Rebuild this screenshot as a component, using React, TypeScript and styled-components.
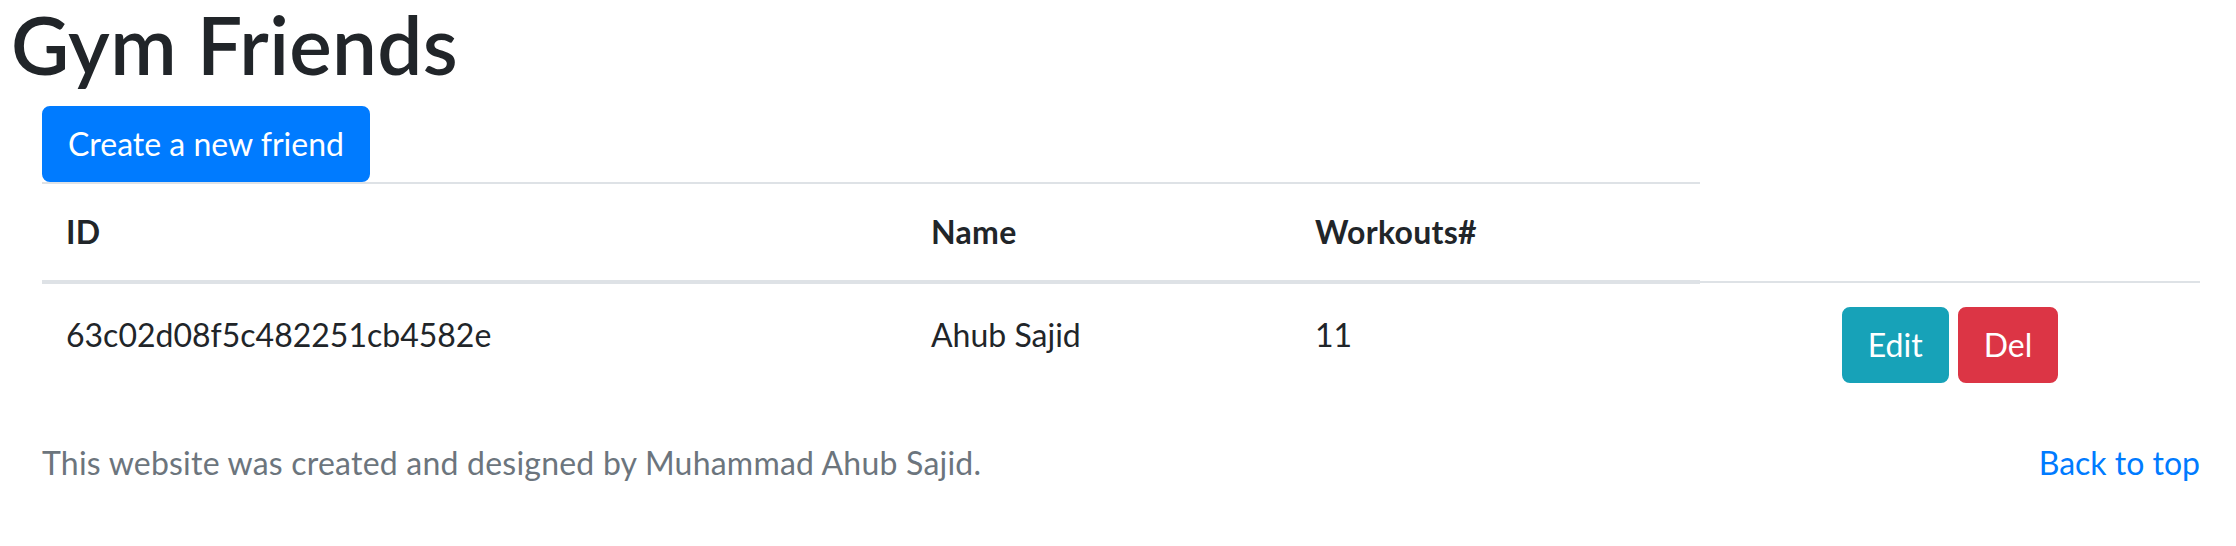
import React from "react";
import styled, { createGlobalStyle, css } from "styled-components";

const Global = createGlobalStyle`
  html, body {
    margin: 0;
    padding: 0;
    background: #ffffff;
  }
  body {
    font-family: Lato, "Open Sans", "Noto Sans", sans-serif;
    font-size: 32px;
    line-height: 48px;
    color: #212529;
    -webkit-font-smoothing: antialiased;
  }
  *, *::before, *::after { box-sizing: border-box; }
`;

const Page = styled.div`
  display: flex;
  flex-direction: column;
  width: 2236px;
`;

const Title = styled.h1`
  margin: -4px 0 14px 11px;
  font-size: 80px;
  line-height: 96px;
  font-weight: 600;
  letter-spacing: 0.3px;
  color: #212529;
`;

const Content = styled.main`
  display: flex;
  flex-direction: column;
  align-items: flex-start;
  padding: 0 36px 0 42px;
`;

type Variant = "primary" | "info" | "danger";

const colors: Record<Variant, string> = {
  primary: "#007bff",
  info: "#17a2b8",
  danger: "#dc3545",
};

const Button = styled.button<{ $variant: Variant }>`
  display: inline-block;
  font-family: inherit;
  font-size: 32px;
  line-height: 48px;
  font-weight: 400;
  padding: 12px 24px;
  border-radius: 8px;
  cursor: pointer;
  color: #ffffff;
  vertical-align: middle;
  ${({ $variant }) => css`
    background: ${colors[$variant]};
    border: 2px solid ${colors[$variant]};
  `}
`;

const Table = styled.table`
  width: 100%;
  border-collapse: collapse;
  table-layout: fixed;
  margin-bottom: 32px;
`;

const HeadCell = styled.th`
  text-align: left;
  font-weight: 700;
  padding: 24px;
  vertical-align: bottom;
  letter-spacing: 0.3px;
  border-top: 2px solid #dee2e6;
  border-bottom: 4px solid #dee2e6;
`;

const Cell = styled.td<{ $center?: boolean }>`
  padding: ${({ $center }) => ($center ? "24px" : "27px 24px 21px")};
  vertical-align: top;
  border-top: 2px solid #dee2e6;
  text-align: ${({ $center }) => ($center ? "center" : "left")};
`;

const Actions = styled.div`
  display: inline-flex;
  gap: 9px;
`;

const Footer = styled.footer`
  display: flex;
  justify-content: space-between;
  align-items: flex-start;
  width: 100%;
`;

const Muted = styled.p`
  margin: 0;
  color: #6c757d;
  letter-spacing: 0.22px;
`;

const Link = styled.a`
  color: #007bff;
  text-decoration: none;
`;

const friends = [
  { id: "63c02d08f5c482251cb4582e", name: "Ahub Sajid", workouts: 11 },
];

export default function App() {
  return (
    <>
      <Global />
      <Page>
        <Title>Gym Friends</Title>
        <Content>
          <Button $variant="primary">Create a new friend</Button>
          <Table>
            <colgroup>
              <col style={{ width: 865 }} />
              <col style={{ width: 384 }} />
              <col style={{ width: 409 }} />
              <col style={{ width: 500 }} />
            </colgroup>
            <thead>
              <tr>
                <HeadCell>ID</HeadCell>
                <HeadCell>Name</HeadCell>
                <HeadCell>Workouts#</HeadCell>
              </tr>
            </thead>
            <tbody>
              {friends.map((f) => (
                <tr key={f.id}>
                  <Cell>{f.id}</Cell>
                  <Cell>{f.name}</Cell>
                  <Cell>{f.workouts}</Cell>
                  <Cell $center>
                    <Actions>
                      <Button $variant="info">Edit</Button>
                      <Button $variant="danger">Del</Button>
                    </Actions>
                  </Cell>
                </tr>
              ))}
            </tbody>
          </Table>
          <Footer>
            <Muted>This website was created and designed by Muhammad Ahub Sajid.</Muted>
            <Link href="#">Back to top</Link>
          </Footer>
        </Content>
      </Page>
    </>
  );
}
